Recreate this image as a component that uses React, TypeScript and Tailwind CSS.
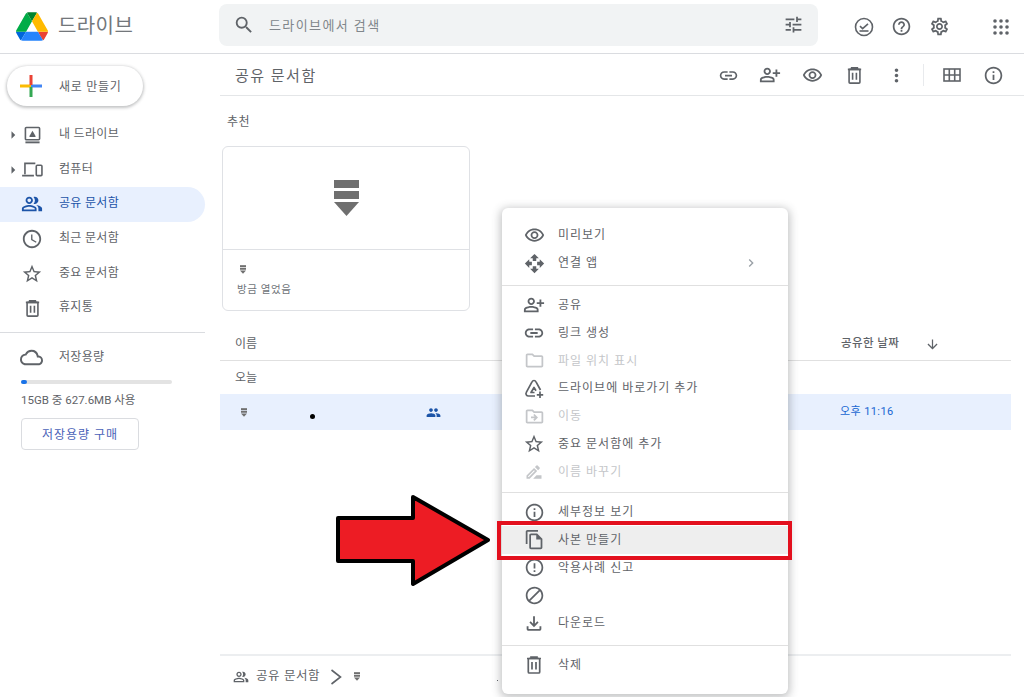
import React from 'react';
import {
  MdArrowDownward, MdArrowRight, MdBlock, MdChevronRight, MdErrorOutline, MdGroup, MdInfoOutline,
  MdLink, MdMoreVert, MdOpenWith, MdOutlineCloud, MdOutlineDriveFileMove, MdOutlineDriveFileRenameOutline,
  MdOutlineFileCopy, MdOutlineFileDownload, MdOutlineFolder, MdOutlineHelpOutline, MdOutlinePeopleAlt, MdOutlinePersonAddAlt,
  MdOutlineSchedule, MdOutlineSettings, MdOutlineStarBorder, MdOutlineVisibility, MdSearch, MdTune,
} from 'react-icons/md';

const FileGlyph = ({ className }: { className: string }) => (
  <svg viewBox="0 0 25 36" className={className} fill="currentColor">
    <rect x="0" y="0" width="25" height="8" />
    <rect x="0" y="11" width="25" height="8" />
    <path d="M0 22h25L12.5 36z" />
  </svg>
);

const DriveLogo = () => (
  <svg viewBox="0 0 87.3 78" className="w-[32px] h-[29px]">
    <path d="m6.6 66.85 3.85 6.65c.8 1.4 1.95 2.5 3.3 3.3l13.75-23.8h-27.5c0 1.55.4 3.1 1.2 4.5z" fill="#0066da" />
    <path d="m43.65 25-13.75-23.8c-1.35.8-2.5 1.9-3.3 3.3l-25.4 44a9.06 9.06 0 0 0 -1.2 4.5h27.5z" fill="#00ac47" />
    <path d="m73.55 76.8c1.35-.8 2.5-1.9 3.3-3.3l1.6-2.75 7.65-13.25c.8-1.4 1.2-2.95 1.2-4.5h-27.502l5.852 11.5z" fill="#ea4335" />
    <path d="m43.65 25 13.75-23.8c-1.35-.8-2.9-1.2-4.5-1.2h-18.5c-1.6 0-3.15.45-4.5 1.2z" fill="#00832d" />
    <path d="m59.8 53h-32.3l-13.75 23.8c1.35.8 2.9 1.2 4.5 1.2h50.8c1.6 0 3.15-.45 4.5-1.2z" fill="#2684fc" />
    <path d="m73.4 26.5-12.7-22c-.8-1.4-1.95-2.5-3.3-3.3l-13.75 23.8 16.15 28h27.45c0-1.55-.4-3.1-1.2-4.5z" fill="#ffba00" />
  </svg>
);

const PlusLogo = () => (
  <svg viewBox="0 0 22 22" className="w-[22px] h-[22px]">
    <rect x="0" y="9.5" width="11" height="3" fill="#fbbc04" />
    <rect x="11" y="9.5" width="11" height="3" fill="#4285f4" />
    <rect x="9.5" y="0" width="3" height="10" fill="#ea4335" />
    <rect x="9.5" y="12" width="3" height="10" fill="#34a853" />
  </svg>
);

const MyDriveIcon = () => (
  <svg viewBox="0 0 18 18" className="w-[17px] h-[18px]" fill="none" stroke="#5f6368" strokeWidth="1.7">
    <rect x="1.5" y="1" width="15" height="13" rx="1" />
    <path d="M1.5 16.8h15" strokeWidth="2" />
    <path d="M9 4.5l3.2 5.5v1H5.8v-1z" fill="#5f6368" stroke="none" />
  </svg>
);

const ComputerIcon = () => (
  <svg viewBox="0 0 22 18" className="w-[21px] h-[17px]" fill="none" stroke="#5f6368" strokeWidth="1.7">
    <path d="M3 14V2.5h11M0 15.5h12.5" />
    <rect x="15" y="4.5" width="6" height="11" rx="1" />
  </svg>
);

const GridIcon = () => (
  <svg viewBox="0 0 18 14" className="w-[18px] h-[14px]" fill="none" stroke="#5f6368" strokeWidth="1.6">
    <rect x="1" y="1" width="16" height="12" />
    <path d="M6.3 1v12M11.7 1v12M1 7h16" />
  </svg>
);

const TrashIcon = ({ size = 20 }: { size?: number }) => (
  <svg viewBox="0 0 20 20" width={size} height={size} fill="none" stroke="currentColor" strokeWidth="1.7">
    <path d="M3 3.5h14M7 3.5V2h6v1.5" />
    <rect x="4.3" y="3.5" width="11.4" height="14.5" rx="1" />
    <path d="M8 7v7.5M12 7v7.5" />
  </svg>
);

const TasksIcon = () => (
  <svg viewBox="0 0 20 20" className="w-[20px] h-[20px]" fill="none" stroke="currentColor" strokeWidth="1.6">
    <circle cx="10" cy="10" r="8.5" />
    <path d="M6 9.2l2.6 2.4L14 6.8" />
    <path d="M5.5 14h9" />
  </svg>
);

const AppsDots = () => (
  <svg viewBox="0 0 16 16" className="w-[16px] h-[16px]" fill="currentColor">
    {[2, 8, 14].map((y) =>
      [2, 8, 14].map((x) => <circle key={`${x}-${y}`} cx={x} cy={y} r="1.8" />),
    )}
  </svg>
);

const ShortcutIcon = () => (
  <svg viewBox="0 0 22 22" className="w-[22px] h-[22px]" fill="none" stroke="currentColor" strokeWidth="1.7" strokeLinejoin="round">
    <path d="M11.5 15.5H8L11 10.5l2 3.2" />
    <path d="M12 19H5.5c-1 0-1.7-.3-2.2-1.2-.5-.8-.5-1.6 0-2.4L9 4.8c.5-1 1.1-1.3 2-1.3s1.500.3 2 1.300l4.500 8.200" />
    <path d="M17 14.500V21M13.800 17.800H20.200" />
  </svg>
);

const ThinChevron = () => (
  <svg viewBox="0 0 12 16" className="w-[12px] h-[16px]" fill="none" stroke="currentColor" strokeWidth="1.6">
    <path d="M1.500 1l9 7-9 7" />
  </svg>
);

const navItems = [
  { label: '내 드라이브', icon: <MyDriveIcon />, caret: true },
  { label: '컴퓨터', icon: <ComputerIcon />, caret: true },
  { label: '공유 문서함', icon: <MdOutlinePeopleAlt size={22} />, active: true },
  { label: '최근 문서함', icon: <MdOutlineSchedule size={22} /> },
  { label: '중요 문서함', icon: <MdOutlineStarBorder size={22} /> },
  { label: '휴지통', icon: <TrashIcon size={19} /> },
];

type MenuItem = { label: string; icon: React.ReactNode; muted?: boolean; more?: boolean; hover?: boolean };

const MenuRow = ({ item }: { item: MenuItem }) => (
  <div className={`h-[27.8px] flex items-center pl-[21px] pr-[29px] gap-[13px] text-[12px] tracking-[1px] ${item.muted ? 'text-[#c4c6c9]' : 'text-[#5f6368]'} ${item.hover ? 'bg-[#eeeeee]' : ''}`}>
    <span className="w-[22px] flex justify-center">{item.icon}</span>
    <span className="flex-1">{item.label}</span>
    {item.more && <span className="text-[#9aa0a6]"><MdChevronRight size={16} /></span>}
  </div>
);

const menuTop: MenuItem[] = [
  { label: '미리보기', icon: <MdOutlineVisibility size={21} /> },
  { label: '연결 앱', icon: <MdOpenWith size={21} />, more: true },
];
const menuMiddle: MenuItem[] = [
  { label: '공유', icon: <MdOutlinePersonAddAlt size={22} /> },
  { label: '링크 생성', icon: <MdLink size={22} /> },
  { label: '파일 위치 표시', icon: <MdOutlineFolder size={21} />, muted: true },
  { label: '드라이브에 바로가기 추가', icon: <ShortcutIcon /> },
  { label: '이동', icon: <MdOutlineDriveFileMove size={21} />, muted: true },
  { label: '중요 문서함에 추가', icon: <MdOutlineStarBorder size={22} /> },
  { label: '이름 바꾸기', icon: <MdOutlineDriveFileRenameOutline size={20} />, muted: true },
];
const menuBottom: MenuItem[] = [
  { label: '세부정보 보기', icon: <MdInfoOutline size={21} /> },
  { label: '사본 만들기', icon: <MdOutlineFileCopy size={21} />, hover: true },
  { label: '악용사례 신고', icon: <MdErrorOutline size={21} /> },
  { label: '', icon: <MdBlock size={21} /> },
  { label: '다운로드', icon: <MdOutlineFileDownload size={23} /> },
];

export default function App() {
  return (
    <div className="relative w-[1024px] h-[697px] overflow-hidden bg-white text-[#5f6368] font-['Roboto','Noto_Sans_CJK_KR',sans-serif]">
      {/* Top bar */}
      <header className="h-[54px] flex items-center border-b border-[#dadce0]">
        <div className="w-[219px] flex items-center pl-[16px] gap-[10px]">
          <DriveLogo />
          <span className="text-[20px] tracking-[0.4px] text-[#73777b] mb-[2px]">드라이브</span>
        </div>
        <div className="w-[599px] h-[42px] mb-[4px] bg-[#f1f3f4] rounded-lg flex items-center pl-[14px] pr-[14px]">
          <MdSearch size={22} />
          <span className="ml-[14px] pt-[2px] flex-1 text-[13px] tracking-[1.4px] text-[#80868b]">드라이브에서 검색</span>
          <MdTune size={21} />
        </div>
        <div className="ml-[36px] flex items-center gap-[17px]">
          <TasksIcon />
          <MdOutlineHelpOutline size={21} />
          <MdOutlineSettings size={21} />
        </div>
        <span className="ml-[43px]"><AppsDots /></span>
      </header>

      <div className="flex h-[643px]">
        {/* Left nav */}
        <aside className="w-[220px] shrink-0">
          <div className="ml-[7px] mt-[12px] w-[136px] h-[40px] rounded-full bg-white shadow-[0_1px_3px_1px_rgba(60,64,67,0.3)] flex items-center pl-[13px] gap-[17px]">
            <PlusLogo />
            <span className="pt-[1px] text-[12px] tracking-[0.7px] text-[#5f6368]">새로 만들기</span>
          </div>
          <nav className="mt-[11.5px]">
            {navItems.map((item) => (
              <div
                key={item.label}
                className={`w-[205px] h-[34.7px] flex items-center rounded-r-full ${item.active ? 'bg-[#e8f0fe] text-[#1c54a8]' : ''}`}
              >
                <span className="w-[21px] flex justify-end text-[#5f6368]">
                  {item.caret && <MdArrowRight size={18} className="-mr-[1px]" />}
                </span>
                <span className="w-[22px] flex justify-center">{item.icon}</span>
                <span className="ml-[16px] pb-[2px] text-[12px] tracking-[0.3px]">{item.label}</span>
              </div>
            ))}
          </nav>
          <div className="w-[205px] mt-[6.5px] border-t border-[#dadce0]" />
          <div className="mt-[13px] h-[22px] flex items-center pl-[20px] gap-[16px]">
            <MdOutlineCloud size={23} />
            <span className="text-[12px] tracking-[0.3px]">저장용량</span>
          </div>
          <div className="ml-[21px] mt-[12px] w-[151px] h-[4px] bg-[#e3e3e3] rounded-full">
            <div className="w-[6px] h-[4px] bg-[#1a73e8] rounded-full" />
          </div>
          <p className="ml-[21px] mt-[8px] text-[11.5px] leading-[16px]">15GB 중 627.6MB 사용</p>
          <div className="ml-[21px] mt-[10px] w-[118px] h-[32px] pt-[1px] border border-[#dadce0] rounded flex items-center justify-center text-[12px] tracking-[1px] text-[#4a62b8]">
            저장용량 구매
          </div>
        </aside>

        {/* Main content */}
        <main className="flex-1 flex flex-col pr-[13px]">
          <div className="h-[42px] -mr-[13px] flex items-center border-b border-[#e4e6e8] pl-[15px] text-[#5f6368]">
            <span className="pt-[3px] text-[15px] tracking-[1.5px] flex-1">공유 문서함</span>
            <div className="pt-[1px] flex items-center">
              <span className="w-[42px] flex justify-center"><MdLink size={21} /></span>
              <span className="w-[42px] flex justify-center"><MdOutlinePersonAddAlt size={22} /></span>
              <span className="w-[42px] flex justify-center"><MdOutlineVisibility size={21} /></span>
              <span className="w-[42px] flex justify-center"><TrashIcon size={19} /></span>
              <span className="w-[42px] flex justify-center"><MdMoreVert size={21} /></span>
              <span className="h-[22px] ml-[6px] border-l border-[#e8eaed]" />
              <span className="w-[55px] flex justify-center"><GridIcon /></span>
              <span className="w-[28px] flex justify-center"><MdInfoOutline size={21} /></span>
              <span className="w-[17px]" />
            </div>
          </div>
          <div className="h-[50px] pt-[2px] flex items-center pl-[7px] text-[12px] tracking-[0.4px]">추천</div>
          <div className="ml-[2px] w-[248px] h-[165px] border border-[#dfe1e5] rounded-md flex flex-col">
            <div className="h-[103px] border-b border-[#dfe1e5] flex items-center justify-center">
              <FileGlyph className="w-[25px] h-[36px] text-[#6f6f6f]" />
            </div>
            <div className="pl-[14px] pt-[15px]">
              <FileGlyph className="ml-[3px] w-[6px] h-[9px] text-[#6f6f6f]" />
              <p className="mt-[8px] text-[10.5px] tracking-[0.6px] text-[#70757a]">방금 열었음</p>
            </div>
          </div>
          <div className="mt-[15px] h-[35px] pt-[2px] border-b border-[#e0e0e0] flex items-center pl-[15px] text-[12px]">
            <span className="w-[606px]">이름</span>
            <span className="font-medium text-[11.5px] tracking-[0.4px]">공유한 날짜</span>
            <MdArrowDownward size={15} className="ml-[26px]" />
          </div>
          <div className="h-[33px] pt-[1px] flex items-center pl-[15px] text-[12px]">오늘</div>
          <div className="relative h-[36px] bg-[#e8f0fe] flex items-center pl-[21px] text-[#1c54a8]">
            <FileGlyph className="w-[6px] h-[9px] text-[#6f6f6f]" />
            <span className="ml-[179px]"><MdGroup size={15} /></span>
            <span className="ml-[399px] text-[11px] tracking-[0.4px] text-[#1967d2]">오후 11:16</span>
            <span className="absolute left-[90px] top-[20px] w-[5px] h-[5px] rounded-full bg-black" />
          </div>
          <div className="flex-1" />
          <div className="h-[43px] border-t-2 border-[#eceef0] flex items-center pl-[13px]">
            <MdOutlinePeopleAlt size={16} />
            <span className="ml-[7px] text-[12.5px] tracking-[0.6px]">공유 문서함</span>
            <span className="ml-[10px]"><ThinChevron /></span>
            <FileGlyph className="ml-[12px] w-[6px] h-[9px] text-[#6f6f6f]" />
            <span className="ml-[137px] mt-[8px] w-[1px] h-[1px] bg-[#5f6368]" />
          </div>
        </main>
      </div>

      {/* Context menu */}
      <div className="absolute left-[502px] top-[208px] w-[286px] h-[486px] bg-white rounded-md shadow-[0_2px_8px_2px_rgba(60,64,67,0.3)] pt-[13.5px]">
        {menuTop.map((item) => <MenuRow key={item.label} item={item} />)}
        <div className="mt-[8px] mb-[5px] border-t border-[#e0e0e0]" />
        {menuMiddle.map((item) => <MenuRow key={item.label} item={item} />)}
        <div className="mt-[6.5px] mb-[5px] border-t border-[#e0e0e0]" />
        {menuBottom.map((item) => <MenuRow key={item.label || 'block'} item={item} />)}
        <div className="mt-[8px] mb-[5px] border-t border-[#e0e0e0]" />
        <MenuRow item={{ label: '삭제', icon: <TrashIcon size={20} /> }} />
      </div>

      {/* Annotation over the screenshot */}
      <div className="absolute left-[497px] top-[521px] w-[295px] h-[39px] border-[4px] border-[#e3101e]" />
      <svg viewBox="0 0 1024 697" className="absolute left-0 top-0 w-[1024px] h-[697px] pointer-events-none">
        <path d="M338 518H413V497L488 540L413 584V561H338z" fill="#ed1c24" stroke="#000" strokeWidth="4" strokeLinejoin="round" />
      </svg>
    </div>
  );
}
